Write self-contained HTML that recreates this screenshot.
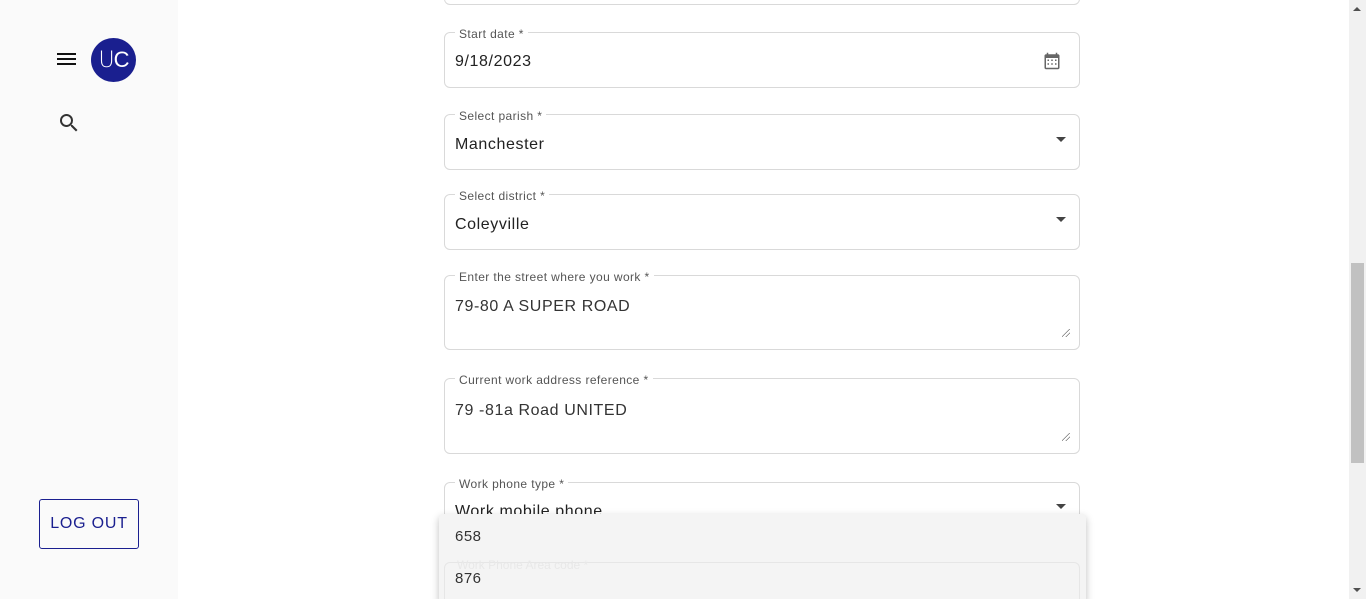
<!DOCTYPE html>
<html style="overflow:hidden;height:599px"><head><meta charset="utf-8"><style>
*{box-sizing:border-box;margin:0;padding:0}
body{width:1366px;height:599px;overflow:hidden;background:#fff;font-family:"Liberation Sans",Roboto,sans-serif;position:relative}
.side{position:absolute;left:0;top:0;width:178px;height:599px;background:#fafafa}
.fld{position:absolute;left:444px;width:636px;border:1px solid #d9d9d9;border-radius:6px}
.lab{position:absolute;left:10px;top:-6px;background:#fff;padding:0 4px;font-size:12px;color:#555;letter-spacing:.4px;line-height:14px}
.val{position:absolute;left:10px;font-size:16px;color:#222;letter-spacing:.6px}
.arr{position:absolute;right:13px;width:0;height:0;border-left:5px solid transparent;border-right:5px solid transparent;border-top:5px solid #444}
.rz{position:absolute;right:9px;bottom:12px;width:8px;height:8px;background:linear-gradient(135deg,transparent 45%,#777 45%,#777 52%,transparent 52%,transparent 70%,#777 70%,#777 77%,transparent 77%)}
</style></head><body>
<div class="side">
  <svg style="position:absolute;left:57px;top:52px" width="19" height="14" viewBox="0 0 19 14"><rect y="1" width="19" height="2" fill="#111"/><rect y="6" width="19" height="2" fill="#111"/><rect y="11" width="19" height="2" fill="#111"/></svg>
  <div style="position:absolute;left:91px;top:38px;width:45px;height:44px;border-radius:50%;background:#1a1f8f;color:#fff;font-size:22px;font-weight:300;line-height:44px;text-align:center;letter-spacing:-1px;font-family:'DejaVu Sans',sans-serif">U<span style="font-family:'Liberation Sans'">C</span></div>
  <svg style="position:absolute;left:57px;top:111px" width="24" height="24" viewBox="0 0 24 24"><path fill="#333" d="M15.5 14h-.79l-.28-.27A6.47 6.47 0 0 0 16 9.5 6.5 6.5 0 1 0 9.5 16c1.61 0 3.09-.59 4.23-1.57l.27.28v.79l5 4.99L20.49 19l-4.99-5zm-6 0C7.01 14 5 11.990 5 9.5S7.01 5 9.5 5 14 7.01 14 9.5 11.99 14 9.5 14z"/></svg>
  <div style="position:absolute;left:39px;top:499px;width:100px;height:50px;border:1px solid #1a1f8f;border-radius:3px;color:#1a1f8f;font-size:16px;line-height:48px;text-align:center;letter-spacing:.8px">LOG OUT</div>
</div>
<div class="fld" style="top:-10px;height:15px"></div>
<div class="fld" style="top:32px;height:56px"><span class="lab">Start date *</span><span class="val" style="top:20px">9/18/2023</span>
<svg style="position:absolute;right:18px;top:19px" width="18" height="18" viewBox="0 0 24 24"><path fill="#666" d="M20 3h-1V1h-2v2H7V1H5v2H4c-1.1 0-2 .9-2 2v16c0 1.1.9 2 2 2h16c1.1 0 2-.9 2-2V5c0-1.1-.9-2-2-2zm0 18H4V8h16v13zM6 10h2v2H6zm5 0h2v2h-2zm5 0h2v2h-2zM6 15h2v2H6zm5 0h2v2h-2zm5 0h2v2h-2z"/></svg></div>
<div class="fld" style="top:114px;height:56px"><span class="lab">Select parish *</span><span class="val" style="top:21px">Manchester</span><span class="arr" style="top:22px"></span></div>
<div class="fld" style="top:194px;height:56px"><span class="lab">Select district *</span><span class="val" style="top:21px">Coleyville</span><span class="arr" style="top:22px"></span></div>
<div class="fld" style="top:275px;height:75px"><span class="lab">Enter the street where you work *</span><span class="val" style="top:22px;color:#333">79-80 A SUPER ROAD</span><span class="rz"></span></div>
<div class="fld" style="top:378px;height:76px"><span class="lab">Current work address reference *</span><span class="val" style="top:23px;color:#333">79 -81a Road UNITED</span><span class="rz"></span></div>
<div class="fld" style="top:482px;height:60px"><span class="lab">Work phone type *</span><span class="val" style="top:20px">Work mobile phone</span><span class="arr" style="top:21px"></span></div>
<div style="position:absolute;left:439px;top:514px;width:647px;height:90px;background:#f4f4f4;box-shadow:0 3px 8px rgba(0,0,0,.25);border-radius:4px">
  <div style="position:absolute;left:16px;top:14px;font-size:15px;color:#333;letter-spacing:.5px">658</div>
  <div style="position:absolute;left:5px;right:6px;top:48px;height:50px;border:1px solid #e6e6e6;border-radius:6px"></div>
  <div style="position:absolute;left:18px;top:44px;font-size:12px;color:#e8e8e8">Work Phone Area code *</div>
  <div style="position:absolute;left:16px;top:56px;font-size:15px;color:#333;letter-spacing:.5px">876</div>
</div>
<div style="position:absolute;left:1349px;top:0;width:17px;height:599px;background:#f1f1f1">
  <div style="position:absolute;left:4px;top:7px;border-left:4px solid transparent;border-right:4px solid transparent;border-bottom:4px solid #505050"></div>
  <div style="position:absolute;left:2px;top:263px;width:13px;height:200px;background:#c1c1c1"></div>
  <div style="position:absolute;left:4px;top:588px;border-left:4px solid transparent;border-right:4px solid transparent;border-top:4px solid #505050"></div>
</div>
</body></html>
